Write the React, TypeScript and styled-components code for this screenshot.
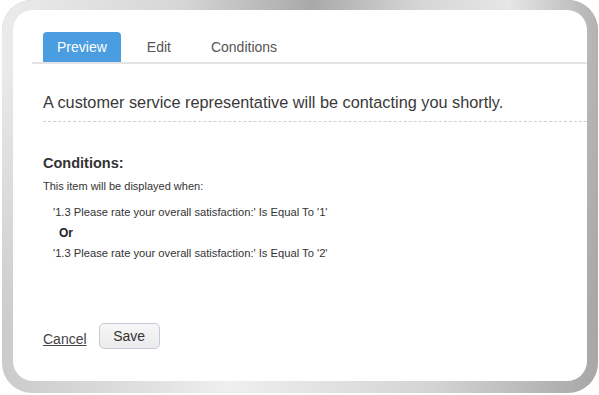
import React, {useState} from "react";
import styled, {createGlobalStyle} from "styled-components";

const GlobalStyle = createGlobalStyle`
  html, body {
    margin: 0;
    padding: 0;
    background: #ffffff;
  }
  body {
    font-family: "Liberation Sans", Arial, Helvetica, sans-serif;
    color: #333;
  }
`

const tabs = ["Preview", "Edit", "Conditions"]

const conditions = [
    "'1.3 Please rate your overall satisfaction:' Is Equal To '1'",
    "'1.3 Please rate your overall satisfaction:' Is Equal To '2'",
]

export default function App() {
    const [active, setActive] = useState("Preview")

    return (
        <>
            <GlobalStyle/>
            <Frame>
                <Card>
                    <TabBar>
                        {tabs.map(t => (
                            <Tab key={t} $active={t === active} onClick={() => setActive(t)}>{t}</Tab>
                        ))}
                    </TabBar>

                    <Message>A customer service representative will be contacting you shortly.</Message>

                    <Conditions>
                        <Heading>Conditions:</Heading>
                        <Intro>This item will be displayed when:</Intro>
                        <Rule $gap={12}>{conditions[0]}</Rule>
                        <Joiner>Or</Joiner>
                        <Rule $gap={6}>{conditions[1]}</Rule>
                    </Conditions>

                    <Footer>
                        <CancelLink href="#">Cancel</CancelLink>
                        <SaveButton>Save</SaveButton>
                    </Footer>
                </Card>
            </Frame>
        </>
    )
}

// metallic frame: bottom gradient as base, top gradient faded in over it
const Frame = styled.div`
  position: relative;
  box-sizing: border-box;
  width: 596px;
  height: 393px;
  margin-left: 2px;
  padding: 10px 11px 12px 11px;
  border-radius: 30px;
  background: linear-gradient(90deg, #cbcbcb 0%, #dcdcdc 20%, #efefef 38%, #d4d4d4 72%, #a7a7a7 100%);

  &::before {
    content: "";
    position: absolute;
    inset: 0;
    border-radius: inherit;
    background: linear-gradient(90deg, #ebebeb 0%, #d6d6d6 30%, #a9a9a9 52%, #d6d6d6 70%, #e6e6e6 85%, #b2b2b2 100%);
    -webkit-mask-image: linear-gradient(to bottom, #000 15%, transparent 85%);
    mask-image: linear-gradient(to bottom, #000 15%, transparent 85%);
  }
`

const Card = styled.div`
  position: relative;
  z-index: 1;
  box-sizing: border-box;
  height: 100%;
  background: #fff;
  border-radius: 20px;
  padding: 22px 0 0 19px;
  display: flex;
  flex-direction: column;
`

const TabBar = styled.div`
  display: flex;
  gap: 12px;
  padding-left: 11px;
  border-bottom: 2px solid #e4e4e4;
`

const Tab = styled.div<{ $active: boolean }>`
  height: 30px;
  line-height: 31px;
  padding: 0 14px;
  font-size: 14px;
  border-radius: 4px 4px 0 0;
  cursor: pointer;
  color: ${p => p.$active ? "#fff" : "#555"};
  background: ${p => p.$active ? "#4a9de0" : "transparent"};
`

const Message = styled.div`
  margin: 29px 0 0 11px;
  padding-bottom: 10px;
  font-size: 16.3px;
  line-height: 18px;
  color: #3a3a3a;
  border-bottom: 1px dashed #d0d0d0;
`

const Conditions = styled.div`
  margin: 33px 0 0 11px;
  display: flex;
  flex-direction: column;
`

const Heading = styled.div`
  font-size: 14.5px;
  font-weight: bold;
  line-height: 17px;
  color: #333;
`

const Intro = styled.div`
  margin-top: 7px;
  font-size: 11px;
  line-height: 14px;
  color: #333;
`

const Rule = styled.div<{ $gap: number }>`
  margin-top: ${p => p.$gap}px;
  padding-left: 10px;
  font-size: 11.2px;
  line-height: 14px;
  color: #333;
`

const Joiner = styled.div`
  margin-top: 7px;
  padding-left: 16px;
  font-size: 12px;
  font-weight: bold;
  line-height: 14px;
  color: #222;
`

const Footer = styled.div`
  margin: auto 0 32px 11px;
  display: flex;
  align-items: center;
  gap: 12px;
`

const CancelLink = styled.a`
  font-size: 14px;
  color: #444;
  text-decoration: underline;
  margin-top: 6px;
`

const SaveButton = styled.button`
  box-sizing: border-box;
  width: 61px;
  height: 26px;
  font-family: "Liberation Sans", Arial, sans-serif;
  font-size: 14px;
  color: #333;
  background: linear-gradient(#f7f7f7, #ebebeb);
  border: 1px solid #c3cbd6;
  border-radius: 5px;
  padding: 0;
`
